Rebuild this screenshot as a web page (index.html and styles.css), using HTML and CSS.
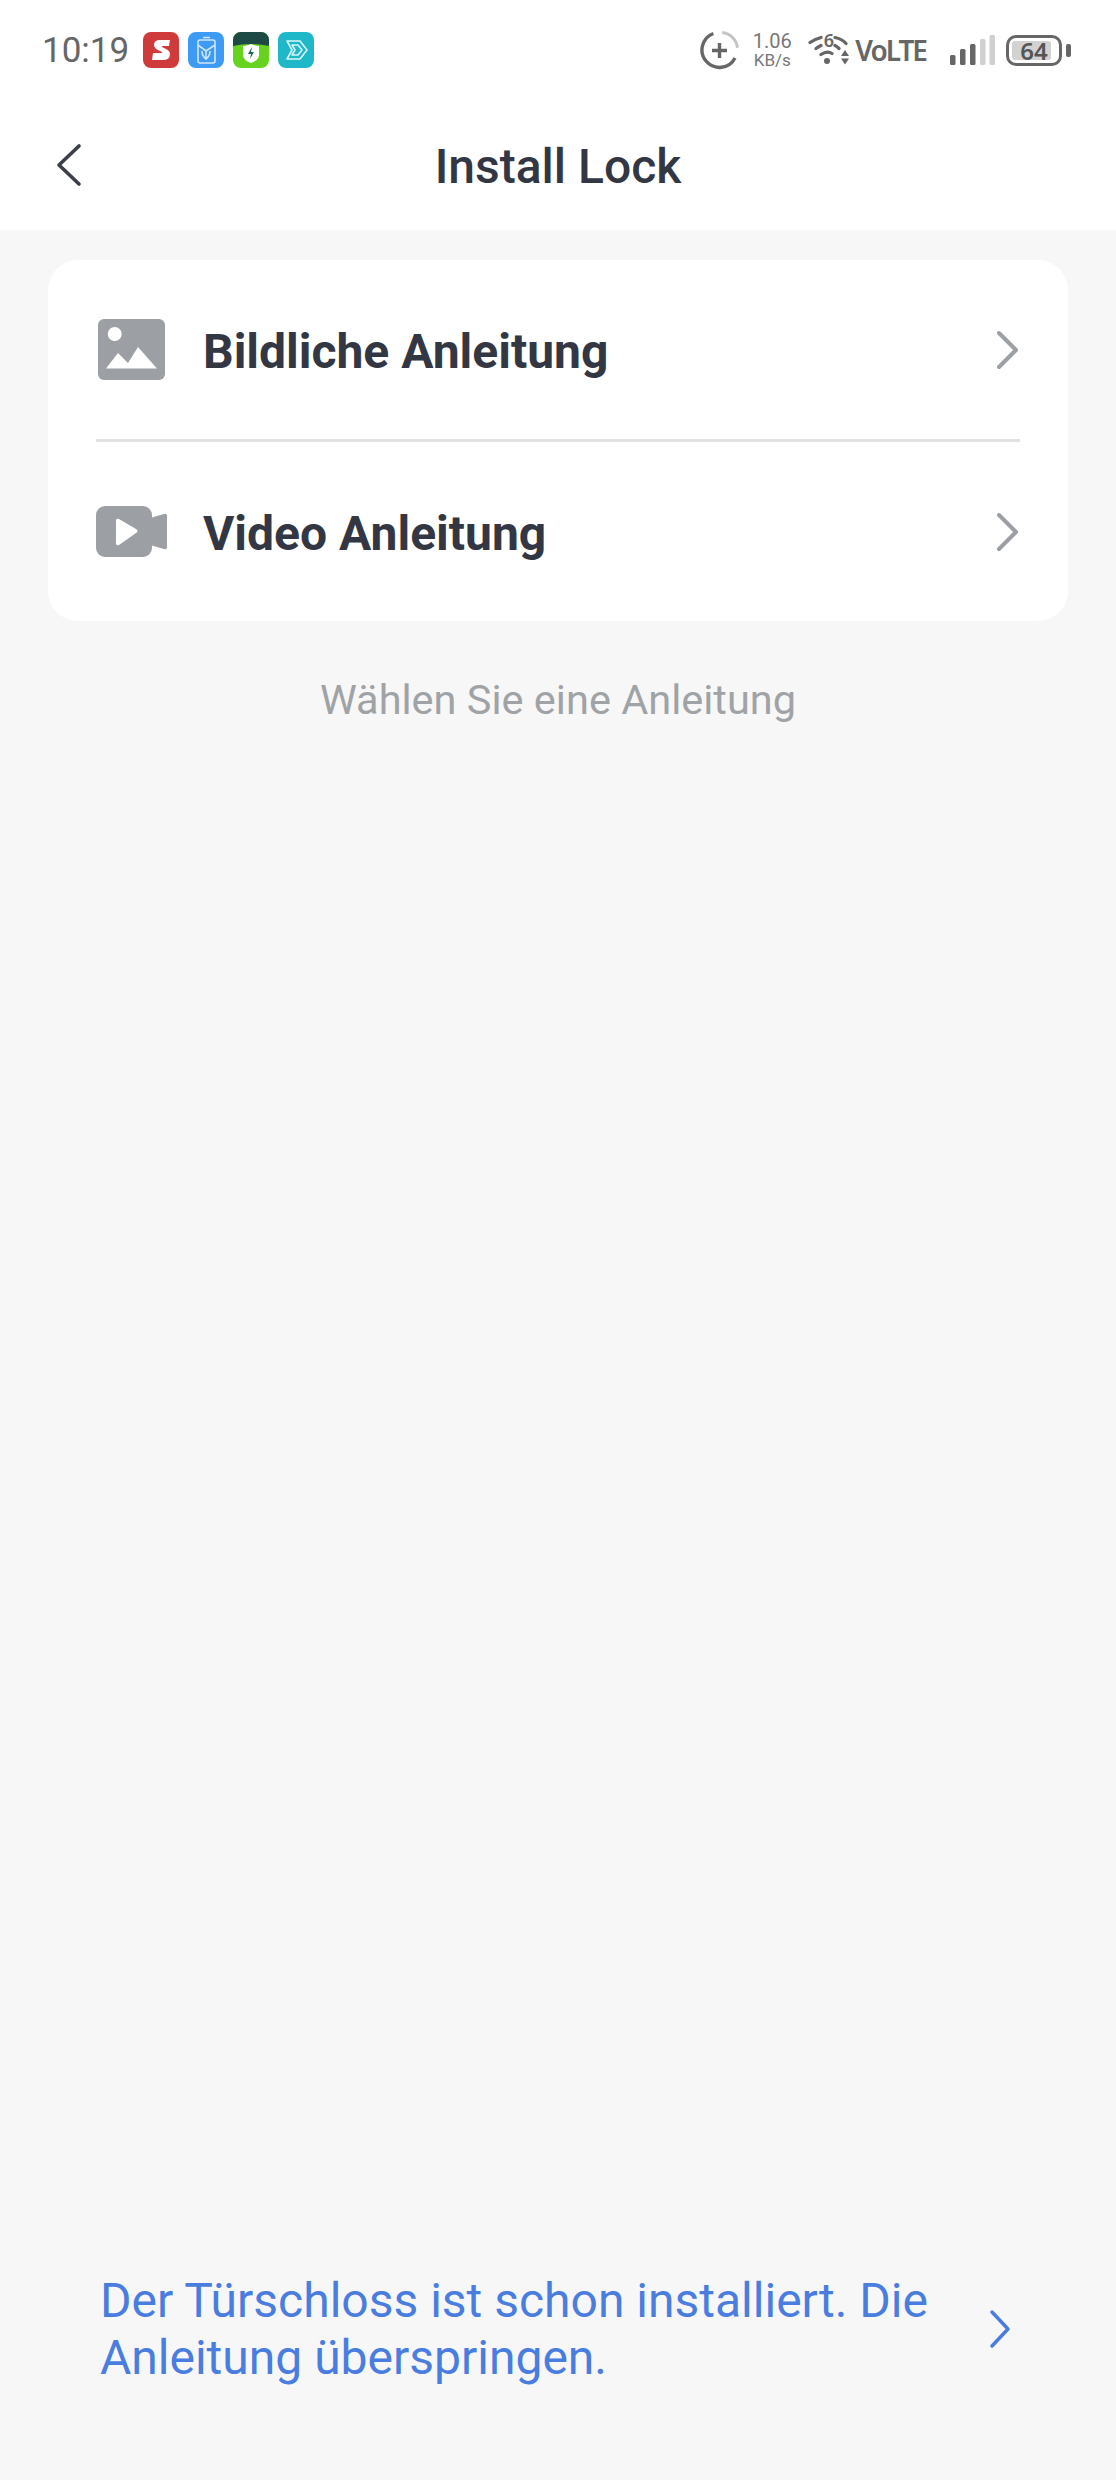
FILE: index.html
```html
<!DOCTYPE html>
<html lang="en">
<head>
    <meta charset="UTF-8">
    <meta name="viewport" content="width=device-width, initial-scale=1.0">
    <title>Install Lock</title>
    <link rel="stylesheet" href="styles.css">
</head>
<body>

    <div class="status-bar">
        <span class="clock">10:19</span>
        <div class="app-icons">
            <svg class="app-icon" viewBox="0 0 36 36"><rect width="36" height="36" rx="8" fill="#cf3a3a"/><path d="M27 8H17q-6 0-6 5 0 3 4 5l4 2q1 1-1 1h-8l-1 7h11q7 0 7-6 0-3-4-5l-4-2q-1-1 1-1h6z" fill="#fff"/></svg>
            <svg class="app-icon" viewBox="0 0 36 36"><rect width="36" height="36" rx="8" fill="#3d9bf5"/><g fill="none" stroke="#cfe6fd" stroke-width="1.6"><rect x="10" y="8" width="17" height="23" rx="2"/><path d="M15 5.500h7M10 13l8 6 9-6M18 19v8M14 19q0 5 4 8 4-3 4-8"/></g></svg>
            <svg class="app-icon" viewBox="0 0 36 36"><rect width="36" height="36" rx="8" fill="#66d41e"/><path d="M0 8a8 8 0 0 1 8-8h20a8 8 0 0 1 8 8v6q-9-2-18-2T0 14z" fill="#1e4a46"/><path d="M10 14q4 0 8-2 4 2 8 2v9q0 5-8 8-8-3-8-8z" fill="#fff"/><path d="M19 15l-4 7h3l-1 5 4-7h-3z" fill="#1e6a50"/></svg>
            <svg class="app-icon" viewBox="0 0 36 36"><rect width="36" height="36" rx="8" fill="#1fb8c9"/><g fill="none" stroke="#d8f6fa" stroke-width="1.600" stroke-linejoin="round"><path d="M9 9h13l7 9-7 9H9l5-9z"/><path d="M14 13h6l4 5-4 5h-6l3-5z"/></g></svg>
        </div>
        <div class="status-right">
            <svg class="data-ring" viewBox="0 0 39 39"><path d="M22.300 1.500A17.500 17.500 0 0 1 37.500 16.700" fill="none" stroke="#c4c4c4" stroke-width="3"/><path d="M13.400 2.500A17.500 17.500 0 1 0 35 27" fill="none" stroke="#666" stroke-width="3.400"/><path d="M12 19.500h15M19.500 12v15" stroke="#666" stroke-width="3.400"/></svg>
            <div class="speed"><span class="speed-num">1.06</span><span class="speed-unit">KB/s</span></div>
            <svg class="wifi" viewBox="0 -8 41 42"><g fill="none" stroke="#666" stroke-width="3.200" stroke-linecap="round"><path d="M2 9.500Q7 6 13 4.500M27 4.500q7 1.500 11 6M8 15.500q3-2 5-3M27 12.500q2 1 4 3M13 21.500q6-4 11-1"/></g><text class="wifi-six" x="21" y="14">6</text><circle cx="19" cy="28" r="3" fill="#666"/><path d="M37 17l4 6h-8zM33 25.500h8l-4 6z" fill="#666"/></svg>
            <span class="volte">VoLTE</span>
            <svg class="signal" viewBox="0 0 45 30"><rect x="0" y="20" width="5.500" height="10" rx="1.500" fill="#666"/><rect x="10" y="14" width="5.500" height="16" rx="1.500" fill="#666"/><rect x="20" y="9" width="5.500" height="21" rx="1.500" fill="#666"/><rect x="30" y="4" width="5.500" height="26" rx="1.500" fill="#d0d0d0"/><rect x="39.500" y="0" width="5.500" height="30" rx="1.500" fill="#d0d0d0"/></svg>
            <div class="battery">
                <div class="battery-body"><div class="battery-fill" style="width: 88%"></div><span class="battery-num">64</span></div>
                <div class="battery-tip"></div>
            </div>
        </div>
    </div>

    <div class="title-bar">
        <svg class="back" viewBox="0 0 28 46"><path d="M24 4L4 23l20 19" fill="none" stroke="#3c3f48" stroke-width="3.600" stroke-linecap="round" stroke-linejoin="round"/></svg>
        <h1 class="title">Install Lock</h1>
    </div>

    <div class="card">
        <div class="row">
            <div class="row-icon">
                <svg class="icon-image" viewBox="0 0 67 61"><rect width="67" height="61" rx="6" fill="#9c9fa3"/><circle cx="16.700" cy="15" r="7" fill="#fff"/><path d="M8 49.500L20 34l10 10 10-16 19 21.500z" fill="#fff"/></svg>
            </div>
            <span class="row-label">Bildliche Anleitung</span>
            <svg class="chevron" viewBox="0 0 24 40"><path d="M3 3l17 17L3 37" fill="none" stroke="#9c9fa3" stroke-width="4" stroke-linecap="round" stroke-linejoin="round"/></svg>
        </div>
        <div class="divider"></div>
        <div class="row">
            <div class="row-icon">
                <svg class="icon-video" viewBox="0 0 71 51"><rect width="56" height="51" rx="9" fill="#9c9fa3"/><path d="M54 12l14-4q3-1 3 2v31q0 3-3 2l-14-4z" fill="#9c9fa3"/><path d="M20 15q0-3 3-2l17 10q3 2 0 4L23 39q-3 1-3-2z" fill="#fff"/></svg>
            </div>
            <span class="row-label">Video Anleitung</span>
            <svg class="chevron" viewBox="0 0 24 40"><path d="M3 3l17 17L3 37" fill="none" stroke="#9c9fa3" stroke-width="4" stroke-linecap="round" stroke-linejoin="round"/></svg>
        </div>
    </div>

    <p class="hint">Wählen Sie eine Anleitung</p>

    <div class="skip">
        <span class="skip-text">Der Türschloss ist schon installiert. Die Anleitung überspringen.</span>
        <svg class="skip-chevron" viewBox="0 0 24 40"><path d="M3 3l16 17L3 37" fill="none" stroke="#4a7de0" stroke-width="3.500" stroke-linecap="round" stroke-linejoin="round"/></svg>
    </div>

</body>
</html>
```

FILE: styles.css
```css
html, body {
    margin: 0;
    height: 100%;
}
body {
    height: 2480px;
    display: flex;
    flex-direction: column;
    font-family: Roboto, "Liberation Sans", sans-serif;
    background-color: #f7f7f7;
    overflow: hidden;
}
.status-bar {
    height: 100px;
    flex: none;
    display: flex;
    align-items: center;
    padding: 0 45px 0 42px;
    background-color: #fff;
    box-sizing: border-box;
}
.clock {
    font-size: 35px;
    color: #666;
    margin-right: 14px;
}
.app-icons {
    display: flex;
    gap: 9px;
}
.app-icon {
    width: 36px;
    height: 36px;
    display: block;
}
.status-right {
    margin-left: auto;
    display: flex;
    align-items: center;
}
.data-ring {
    width: 39px;
    height: 39px;
    margin-right: 12px;
}
.speed {
    display: flex;
    flex-direction: column;
    align-items: center;
    color: #777;
    width: 42px;
    margin-right: 15px;
}
.speed-num {
    font-size: 20px;
    line-height: 20px;
}
.speed-unit {
    font-size: 17px;
    line-height: 18px;
}
.wifi {
    width: 41px;
    height: 42px;
    margin-top: -8px;
}
.wifi-six {
    font-family: "Noto Sans", sans-serif;
    font-size: 18px;
    font-weight: 600;
    fill: #666;
    text-anchor: middle;
}
.volte {
    font-family: "Noto Sans", sans-serif;
    font-weight: 600;
    font-size: 28px;
    color: #666;
    letter-spacing: -2px;
    margin-left: 6px;
    margin-right: 24px;
}
.signal {
    width: 45px;
    height: 30px;
    margin-right: 11px;
}
.battery {
    display: flex;
    align-items: center;
    gap: 4px;
}
.battery-body {
    position: relative;
    width: 44px;
    height: 19px;
    border: 3px solid #666;
    border-radius: 10px;
    padding: 3px;
}
.battery-fill {
    height: 100%;
    background-color: #d2d2d2;
    border-radius: 3px;
}
.battery-num {
    position: absolute;
    inset: 0;
    text-align: center;
    font-family: "Noto Sans", sans-serif;
    font-weight: 600;
    font-size: 24px;
    line-height: 25px;
    color: #555;
}
.battery-tip {
    width: 5px;
    height: 13px;
    background-color: #666;
    border-radius: 2px;
}
.title-bar {
    height: 130px;
    flex: none;
    display: flex;
    align-items: center;
    justify-content: center;
    position: relative;
    background-color: #fff;
}
.back {
    position: absolute;
    left: 55px;
    top: 42px;
    width: 28px;
    height: 46px;
}
.title {
    margin: 0;
    padding-top: 2px;
    font-size: 48px;
    font-weight: 500;
    color: #333743;
}
.card {
    margin: 30px 48px 0;
    flex: none;
    background-color: #fff;
    border-radius: 30px;
}
.row {
    height: 179px;
    display: flex;
    align-items: center;
    padding: 0 48px;
}
.row-icon {
    width: 107px;
    flex: none;
}
.icon-image {
    display: block;
    width: 67px;
    height: 61px;
    margin-left: 2px;
}
.icon-video {
    display: block;
    width: 71px;
    height: 51px;
}
.row-label {
    flex: 1;
    padding-top: 4px;
    font-size: 48px;
    font-weight: 700;
    color: #333743;
}
.chevron {
    width: 24px;
    height: 40px;
}
.divider {
    height: 3px;
    margin: 0 48px;
    background-color: #e2e2e2;
}
.hint {
    margin: 50px 0 0;
    text-align: center;
    font-size: 41.500px;
    line-height: 58px;
    color: #a0a3a6;
}
.skip {
    margin-top: auto;
    margin-bottom: 94px;
    padding: 0 103px 0 100px;
    display: flex;
    align-items: center;
    justify-content: space-between;
    color: #4a7de0;
}
.skip-text {
    width: 860px;
    font-size: 48px;
    line-height: 57px;
}
.skip-chevron {
    width: 24px;
    height: 40px;
}
```
